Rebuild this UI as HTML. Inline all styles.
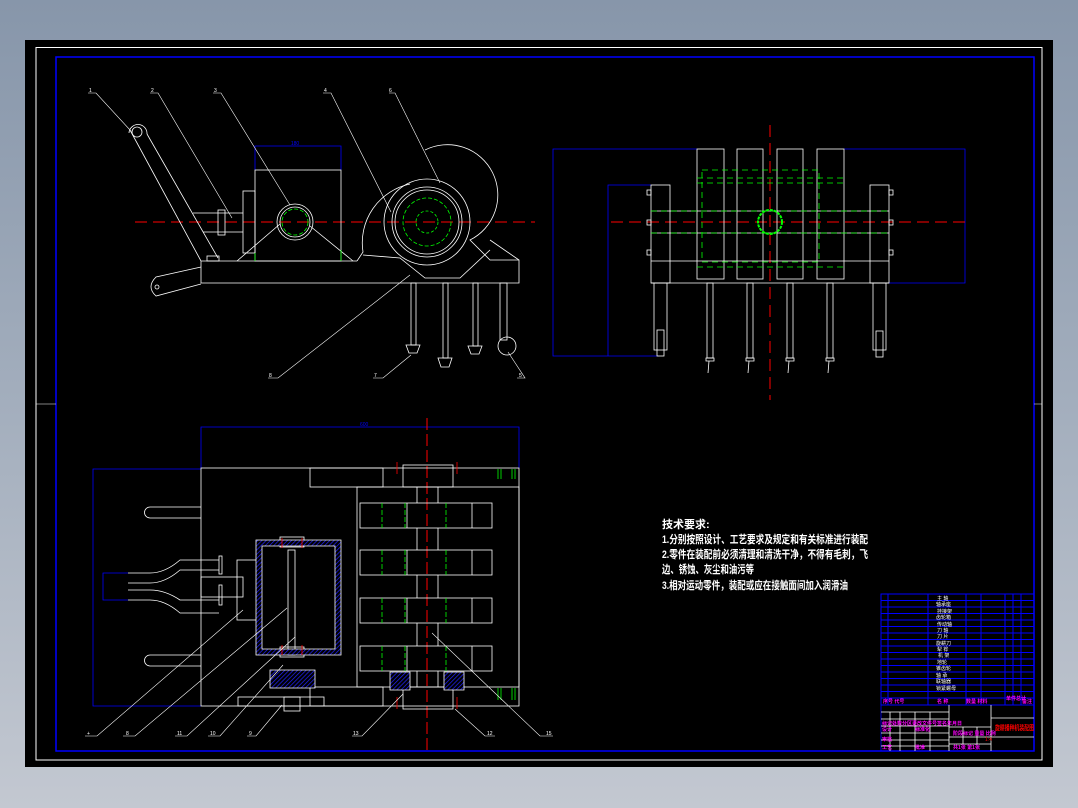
<!DOCTYPE html>
<html><head><meta charset="utf-8"><style>
html,body{margin:0;padding:0;}
body{width:1078px;height:808px;overflow:hidden;background:linear-gradient(#8796aa 0%,#a3aebd 50%,#c3c8d1 100%);position:relative;font-family:"Liberation Sans","Noto Sans CJK SC",sans-serif;}
svg{position:absolute;left:0;top:0;}
</style></head><body>
<svg width="1078" height="808" viewBox="0 0 1078 808" xmlns="http://www.w3.org/2000/svg">
<defs>
<pattern id="h" width="3" height="3" patternUnits="userSpaceOnUse" patternTransform="rotate(45)">
<rect width="3" height="3" fill="#000"/><line x1="0" y1="0" x2="0" y2="3" stroke="#22f" stroke-width="1.4"/>
</pattern>
</defs>
<rect x="25" y="40" width="1028" height="727" fill="#000"/>
<rect x="36" y="47.5" width="1006" height="712.5" fill="none" stroke="#fff" stroke-width="1"/>
<rect x="56" y="57" width="978" height="694" fill="none" stroke="#00f" stroke-width="1.5"/>
<line x1="36" y1="404" x2="56" y2="404" stroke="#fff" stroke-width="0.5"/>
<line x1="1034" y1="404" x2="1042" y2="404" stroke="#fff" stroke-width="0.5"/>

<!-- ===== TOP-LEFT VIEW ===== -->
<g fill="none" stroke="#fff" stroke-width="0.8">
<line x1="135" y1="222" x2="535" y2="222" stroke="#f00" stroke-dasharray="12,6" stroke-width="1"/>
<polyline points="255,170 255,146 341,146 341,170" stroke="#00f"/>
<path d="M201,261 L357,261 M201,261 L201,283 L519,283 L519,260 L490,240"/>
<path d="M201,267 L156,277 Q146,287 156,296 L201,284"/>
<circle cx="157" cy="287" r="2"/>
<path d="M130,130 L201,261 M147,134 L218,258 M129,133 A8,8 0 0 1 147,134"/>
<circle cx="137" cy="132" r="5"/>
<rect x="207" y="256" width="12" height="5"/>
<rect x="255" y="170" width="86" height="91"/>
<rect x="243" y="191" width="12" height="62"/>
<rect x="218" y="210" width="7" height="25"/>
<line x1="193" y1="213" x2="243" y2="213"/><line x1="203" y1="232" x2="243" y2="232"/>
<circle cx="295" cy="222" r="18"/><circle cx="295" cy="222" r="15"/>
<circle cx="295" cy="222" r="13" stroke="#0f0" stroke-dasharray="4,2"/>
<path d="M237,261 L280,224 M310,226 L353,261"/>
<line x1="255" y1="253" x2="255" y2="261" stroke="#0f0"/><line x1="341" y1="250" x2="341" y2="261" stroke="#0f0"/>
<circle cx="427" cy="222" r="43"/>
<circle cx="427" cy="222" r="35"/><circle cx="427" cy="222" r="32"/>
<circle cx="427" cy="222" r="24" stroke="#0f0" stroke-dasharray="4,2"/>
<circle cx="427" cy="222" r="11" stroke="#0f0" stroke-dasharray="3,2"/>
<path d="M425,150 A48,48 0 0 1 470,240 L490,260 L519,260"/>
<path d="M410,184 A60,60 0 0 0 363,252 L357,261"/>
<path d="M363,255 L400,258 L425,278 L460,278 L490,250"/>
<rect x="411" y="283" width="5" height="62"/><path d="M406,345 h14 l-3,8 h-8 z"/>
<rect x="443" y="283" width="5" height="75"/><path d="M438,358 h14 l-3,9 h-8 z"/>
<rect x="473" y="283" width="5" height="63"/><path d="M468,346 h14 l-3,8 h-8 z"/>
<rect x="500" y="283" width="7" height="57"/><circle cx="507" cy="346" r="9"/>
<g stroke-width="0.6">
<polyline points="88,93 96,93 130,130"/><polyline points="150,93 158,93 232,218"/>
<polyline points="213,93 221,93 290,205"/><polyline points="323,93 331,93 391,212"/>
<polyline points="389,93 395,93 440,183"/>
<polyline points="268,378 278,378 410,275"/><polyline points="373,378 383,378 411,355"/>
<polyline points="517,378 525,378 508,352"/>
</g>
</g>
<g fill="#fff" font-size="5"><text x="89" y="92">1</text><text x="151" y="92">2</text><text x="214" y="92">3</text><text x="324" y="92">4</text><text x="389" y="92">6</text><text x="269" y="377">8</text><text x="374" y="377">7</text><text x="519" y="377">5</text></g>
<text x="295" y="145" fill="#00f" font-size="5" text-anchor="middle">180</text>

<!-- ===== TOP-RIGHT VIEW ===== -->
<g fill="none" stroke-width="0.8">
<g stroke="#00f">
<polyline points="697,149 553,149 553,356 659,356"/>
<polyline points="651,185 608,185 608,356"/>
<polyline points="844,149 965,149 965,283 889,283"/>
</g>
<line x1="611" y1="222" x2="965" y2="222" stroke="#f00" stroke-dasharray="12,6" stroke-width="1"/>
<line x1="770" y1="125" x2="770" y2="400" stroke="#f00" stroke-dasharray="12,6" stroke-width="1"/>
<g stroke="#fff">
<path d="M651,211 H889 M651,233 H889 M651,261 H889 M651,283 H889"/>
<rect x="651" y="185" width="19" height="98"/><rect x="870" y="185" width="19" height="98"/>
<rect x="697" y="149" width="27" height="130"/><rect x="737" y="149" width="26" height="130"/>
<rect x="777" y="149" width="26" height="130"/><rect x="817" y="149" width="27" height="130"/>
<rect x="654" y="283" width="13" height="67"/><rect x="873" y="283" width="13" height="67"/>
<rect x="657" y="330" width="7" height="26"/><rect x="876" y="331" width="7" height="26"/>
<rect x="707" y="283" width="6" height="75"/><path d="M706,358h8v3h-8z M709,361 l-1,12"/>
<rect x="747" y="283" width="6" height="75"/><path d="M746,358h8v3h-8z M749,361 l-1,12"/>
<rect x="787" y="283" width="6" height="75"/><path d="M786,358h8v3h-8z M789,361 l-1,12"/>
<rect x="827" y="283" width="6" height="75"/><path d="M826,358h8v3h-8z M829,361 l-1,12"/>
<rect x="647" y="190" width="4" height="5"/><rect x="647" y="220" width="4" height="5"/><rect x="647" y="250" width="4" height="5"/>
<rect x="889" y="190" width="4" height="5"/><rect x="889" y="220" width="4" height="5"/><rect x="889" y="250" width="4" height="5"/>
</g>
<g stroke="#0f0" stroke-dasharray="6,4">
<rect x="702" y="170" width="117" height="92"/>
<path d="M697,178 H844 M697,183 H844 M651,211 H889 M651,233 H889 M697,267 H844"/>
</g>
<circle cx="770" cy="222" r="12" stroke="#0f0" stroke-width="2" stroke-dasharray="3,1"/>
</g>

<!-- ===== BOTTOM-LEFT VIEW ===== -->
<g fill="none" stroke-width="0.8">
<g stroke="#00f">
<polyline points="201,468 201,427 519,427 519,468"/>
<polyline points="201,469 93,469 93,706 201,706"/>
<polyline points="128,573 103,573 103,600 128,600"/>
</g>
<text x="360" y="426" fill="#00f" font-size="5" stroke="none">600</text>
<line x1="427" y1="418" x2="427" y2="750" stroke="#f00" stroke-dasharray="12,4" stroke-width="1"/>
<g stroke="#fff">
<rect x="201" y="468" width="318" height="238"/>
<rect x="357" y="487" width="162" height="200"/>
<rect x="310" y="468" width="73" height="19"/><rect x="310" y="687" width="73" height="19"/>
<rect x="403" y="465" width="50" height="22"/><rect x="403" y="687" width="50" height="22"/>
<rect x="360" y="503" width="132" height="25"/><rect x="360" y="550" width="132" height="25"/>
<rect x="360" y="598" width="132" height="25"/><rect x="360" y="646" width="132" height="25"/>
<path d="M407,503v25 M472,503v25 M407,550v25 M472,550v25 M407,598v25 M472,598v25 M407,646v25 M472,646v25"/>
<path d="M417,487v16 M438,487v16 M417,528v22 M438,528v22 M417,575v23 M438,575v23 M417,623v23 M438,623v23 M417,671v16 M438,671v16"/>
<path d="M150,507 H201 M150,518 H201 M150,507 a5,5 0 0 0 0,11"/>
<path d="M150,655 H201 M150,666 H201 M150,655 a5,5 0 0 0 0,11"/>
<path d="M128,573 H150 Q165,573 180,560 H219 M128,583 H150 Q165,583 180,570 H219"/>
<path d="M128,590 H150 Q165,590 180,600 H219 M128,600 H150 Q165,600 180,613 H219"/>
<rect x="219" y="556" width="3" height="18"/><rect x="219" y="585" width="3" height="20"/>
<rect x="201" y="577" width="42" height="20"/>
<rect x="237" y="560" width="20" height="60"/>
<rect x="288" y="550" width="7" height="105"/>
<rect x="280" y="537" width="24" height="10"/><rect x="280" y="647" width="24" height="10"/>
<rect x="238" y="697" width="86" height="9"/>
<rect x="284" y="697" width="16" height="14"/>
</g>
<path d="M256,540 H341 V655 H256 Z M262,546 V649 H335 V546 Z" fill="url(#h)" fill-rule="evenodd" stroke="#fff" stroke-width="0.8"/>
<path d="M270,670 h45 v18 h-45 z" fill="url(#h)" stroke="#fff"/>
<path d="M390,672 h20 v18 h-20 z M444,672 h20 v18 h-20 z" fill="url(#h)" stroke="#fff"/>
<g stroke="#0f0"><path d="M382,503v25 M405,503v25 M446,503v25 M382,550v25 M405,550v25 M446,550v25 M382,598v25 M405,598v25 M446,598v25 M382,646v25 M405,646v25 M446,646v25" stroke-dasharray="5,2"/>
<path d="M498,469v10 M501,469v10 M512,469v10 M515,469v10 M498,688v12 M501,688v12 M512,688v12 M515,688v12"/></g>
<g stroke="#f00"><path d="M397,462v12 M457,462v12 M397,697v12 M457,697v12 M282,538v10 M302,538v10 M282,645v10 M302,645v10"/></g>
<g stroke="#fff" stroke-width="0.6">
<polyline points="85,736 97,736 243,610"/><polyline points="123,736 135,736 287,608"/>
<polyline points="175,736 187,736 295,637"/><polyline points="208,736 220,736 283,665"/>
<polyline points="247,736 256,736 282,705"/><polyline points="352,736 362,736 403,694"/>
<polyline points="495,736 485,736 455,709"/><polyline points="553,736 540,736 432,633"/>
</g>
</g>
<g fill="#fff" font-size="5"><text x="87" y="735">+</text><text x="126" y="735">8</text><text x="177" y="735">11</text><text x="210" y="735">10</text><text x="249" y="735">9</text><text x="353" y="735">13</text><text x="487" y="735">12</text><text x="546" y="735">15</text></g>

<!-- ===== TECH TEXT ===== -->
<g fill="#fff" font-family="'Liberation Sans','Noto Sans CJK SC',sans-serif" font-size="11" font-weight="bold">
<text x="662" y="528">技术要求:</text>
<text x="662" y="543" textLength="206" lengthAdjust="spacingAndGlyphs">1.分别按照设计、工艺要求及规定和有关标准进行装配</text>
<text x="662" y="558" textLength="206" lengthAdjust="spacingAndGlyphs">2.零件在装配前必须清理和清洗干净，不得有毛刺，飞</text>
<text x="662" y="573" textLength="92" lengthAdjust="spacingAndGlyphs">边、锈蚀、灰尘和油污等</text>
<text x="662" y="589" textLength="186" lengthAdjust="spacingAndGlyphs">3.相对运动零件，装配或应在接触面间加入润滑油</text>
</g>

<!-- ===== PARTS LIST / TITLE ===== -->
<g fill="none" stroke="#00f" stroke-width="1">
<rect x="881" y="594" width="153" height="111"/>
<path d="M881,600.5H1034 M881,607H1034 M881,613.5H1034 M881,620H1034 M881,626.5H1034 M881,633H1034 M881,639.5H1034 M881,646H1034 M881,652.5H1034 M881,659H1034 M881,665.5H1034 M881,672H1034 M881,678.5H1034 M881,685H1034 M881,691.5H1034 M881,698H1034"/>
<path d="M888,594V705 M928,594V705 M966,594V705 M981,594V705 M1005,594V705 M1013,594V705 M1021,594V705"/>
</g>
<g fill="#fff" font-size="5">
<text x="937" y="600">主 轴</text><text x="936" y="606">轴承座</text><text x="937" y="613">挂接架</text><text x="936" y="619">齿轮箱</text><text x="937" y="626">传动轴</text><text x="937" y="632">刀 轴</text><text x="937" y="638">刀 片</text><text x="936" y="645">旋耕刀</text><text x="937" y="651">犁 铧</text><text x="938" y="657">机 架</text><text x="937" y="664">地轮</text><text x="936" y="670">锥齿轮</text><text x="936" y="677">轴 承</text><text x="936" y="683">联轴器</text><text x="936" y="690">锁紧螺母</text>
</g>
<g fill="#f0f" font-size="5" font-weight="bold"><text x="883" y="703">序号 代号</text><text x="937" y="703">名 称</text><text x="966" y="703">数量 材料</text><text x="1006" y="700">单件总计</text><text x="1022" y="703">备注</text></g>
<g fill="none" stroke="#fff" stroke-width="0.8">
<rect x="881" y="705" width="153" height="46" stroke="#00f"/>
<path d="M949,705V751 M991,705V751 M991,718H1034 M991,737H1034 M881,712H949 M881,719H949 M881,726H949 M881,733H949 M881,740H949 M881,746H949 M890,712V751 M900,712V751 M915,712V751 M930,712V751 M949,727H991 M949,737H991 M949,744H991 M963,727V744 M977,727V744"/>
</g>
<g fill="#f0f" font-size="5" font-weight="bold"><text x="882" y="725">标记处数分区更改文件号签名年月日</text><text x="882" y="731">设计</text><text x="915" y="731">标准化</text><text x="882" y="741">审核</text><text x="882" y="749">工艺</text><text x="915" y="749">批准</text><text x="953" y="735">阶段标记 重量 比例</text><text x="953" y="749">共1张 第1张</text></g>
<text x="985" y="741" fill="#f00" font-size="5">1:4</text>
<text x="995" y="730" fill="#f00" font-size="7" font-weight="bold" textLength="39" lengthAdjust="spacingAndGlyphs">旋耕播种机装配图</text>
</svg>
</body></html>
